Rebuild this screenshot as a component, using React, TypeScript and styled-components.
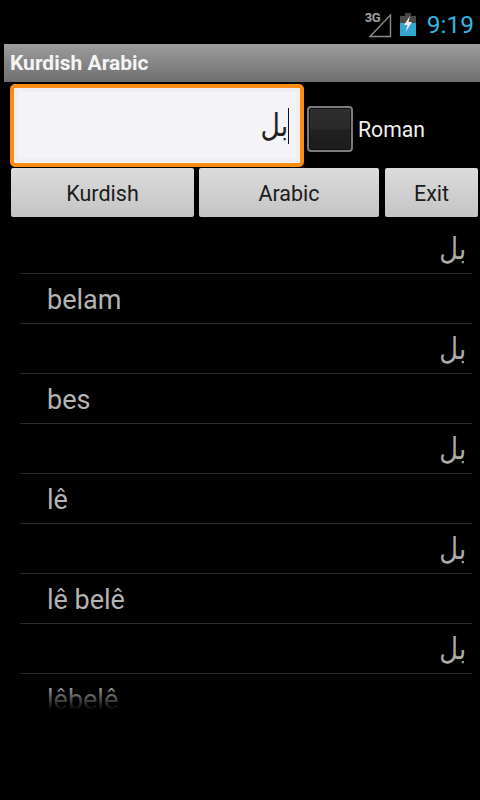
import React from "react";
import styled, { createGlobalStyle } from "styled-components";

const Global = createGlobalStyle`
  html, body { margin: 0; padding: 0; background: #000; }
  body { width: 480px; height: 800px; overflow: hidden; font-family: Roboto, "Liberation Sans", sans-serif; }
`;

const Screen = styled.div`
  width: 480px;
  height: 800px;
  background: #000;
  display: flex;
  flex-direction: column;
`;

const StatusBar = styled.div`
  height: 44px;
  padding: 4px 6px 0 0;
  display: flex;
  align-items: center;
  justify-content: flex-end;
  box-sizing: border-box;
`;

const Signal = styled.div`
  position: relative;
  width: 30px;
  height: 28px;
  margin-right: 8px;
`;

const SignalIcon = styled.svg`
  display: block;
  width: 30px;
  height: 28px;
`;

const NetworkBadge = styled.span`
  position: absolute;
  left: 3px;
  top: 2px;
  color: #a0a0a0;
  font-size: 13px;
  line-height: 12px;
  font-weight: 700;
  letter-spacing: -0.5px;
`;

const BatteryIcon = styled.svg`
  width: 16px;
  height: 23px;
  margin-right: 11px;
`;

const Clock = styled.span`
  color: #33b5e5;
  font-size: 24.5px;
  line-height: 28px;
  font-weight: 400;
  margin-top: 2px;
`;

const TitleBar = styled.div`
  height: 38px;
  margin-left: 4px;
  padding-left: 6px;
  display: flex;
  align-items: center;
  background: linear-gradient(#9c9c9c, #6f6f6f);
  color: #f4f4f4;
  font-weight: 700;
  font-size: 21px;
`;

const SearchRow = styled.div`
  height: 84px;
  margin-top: 1px;
  padding-left: 10px;
  display: flex;
  align-items: center;
`;

const InputBox = styled.div`
  width: 294px;
  height: 83px;
  box-sizing: border-box;
  border: 4px solid #fb8c14;
  border-radius: 5px;
  background: #f4f3f6;
  box-shadow: inset 0 0 0 4px #efeef0;
  display: flex;
  align-items: center;
  justify-content: flex-end;
  padding-right: 11px;
`;

const InputText = styled.span`
  display: inline-block;
  transform: scaleX(0.86);
  transform-origin: right center;
  font-family: "DejaVu Sans", sans-serif;
  font-size: 31px;
  line-height: 50px;
  height: 50px;
  direction: rtl;
  color: #222;
`;

const Caret = styled.span`
  width: 1px;
  height: 36px;
  background: #111;
  margin-top: 2px;
`;

const Check = styled.div`
  width: 46px;
  height: 46px;
  box-sizing: border-box;
  margin: 7px 0 0 3px;
  border: 2px solid #7c7c7c;
  border-radius: 4px;
  background: linear-gradient(#2e2e2e, #2a2a2a 50%, #222 50%, #1c1c1c);
  box-shadow: inset 0 0 0 1px #111;
`;

const CheckLabel = styled.span`
  margin: 8px 0 0 5px;
  color: #f0f0f0;
  font-size: 21.2px;
`;

const ButtonRow = styled.div`
  height: 49px;
  margin-top: 1px;
  display: flex;
  padding-left: 11px;
  gap: 5px;
`;

const Button = styled.div<{ $w: number; $after?: number }>`
  width: ${(p) => p.$w}px;
  height: 49px;
  margin-right: ${(p) => p.$after ?? 0}px;
  box-sizing: border-box;
  padding-top: 2px;
  border-radius: 2px;
  background: linear-gradient(#dcdcdc, #c4c4c4);
  color: #1c1c1c;
  font-size: 21.5px;
  display: flex;
  align-items: center;
  justify-content: center;
`;

const List = styled.div`
  position: relative;
  height: 486px;
  margin-top: 7px;
  margin-left: 20px;
  width: 452px;
  overflow: hidden;
  &::after {
    content: "";
    position: absolute;
    left: 0;
    right: 0;
    bottom: 0;
    height: 26px;
    background: linear-gradient(rgba(0, 0, 0, 0), #000);
  }
`;

const Row = styled.div<{ $rtl?: boolean }>`
  height: 50px;
  box-sizing: border-box;
  border-bottom: 1px solid #2a2a2a;
  display: flex;
  align-items: center;
  justify-content: ${(p) => (p.$rtl ? "flex-end" : "flex-start")};
  padding: ${(p) => (p.$rtl ? "0 6px 0 0" : "2px 0 0 27px")};
  color: #b4b4b4;
  font-size: 27px;
`;

const ArabicWord = styled.span`
  display: inline-block;
  transform: scaleX(0.86);
  transform-origin: right center;
  font-family: "DejaVu Sans", sans-serif;
  font-size: 30px;
  color: #aaa;
`;

const rows: [string, boolean][] = [
  ["بل", true],
  ["belam", false],
  ["بل", true],
  ["bes", false],
  ["بل", true],
  ["lê", false],
  ["بل", true],
  ["lê belê", false],
  ["بل", true],
  ["lêbelê", false],
];

export default function App() {
  return (
    <Screen>
      <Global />
      <StatusBar>
        <Signal>
          <SignalIcon viewBox="0 0 30 28">
            <path d="M8 26.5 L28.5 5 V26.5 Z" fill="none" stroke="#8a8a8a" strokeWidth="1.4" />
          </SignalIcon>
          <NetworkBadge>3G</NetworkBadge>
        </Signal>
        <BatteryIcon viewBox="0 0 16 23">
          <rect x="5" y="0" width="6" height="3" fill="#444" />
          <rect x="0" y="3" width="16" height="7" fill="#4a4a4a" />
          <rect x="0" y="10" width="16" height="13" fill="#33a5cf" />
          <path d="M10 3 L4 12 H7.5 L5.5 19 L12 9 H8.5 Z" fill="#f6e8e8" />
        </BatteryIcon>
        <Clock>9:19</Clock>
      </StatusBar>
      <TitleBar>Kurdish Arabic</TitleBar>
      <SearchRow>
        <InputBox>
          <InputText>بل</InputText>
          <Caret />
        </InputBox>
        <Check />
        <CheckLabel>Roman</CheckLabel>
      </SearchRow>
      <ButtonRow>
        <Button $w={183}>Kurdish</Button>
        <Button $w={180} $after={1}>Arabic</Button>
        <Button $w={93}>Exit</Button>
      </ButtonRow>
      <List>
        {rows.map(([text, rtl], i) => (
          <Row key={i} $rtl={rtl}>
            {rtl ? <ArabicWord>{text}</ArabicWord> : text}
          </Row>
        ))}
      </List>
    </Screen>
  );
}
